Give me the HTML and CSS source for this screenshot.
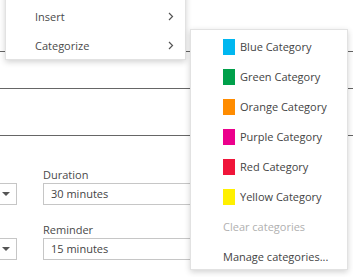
FILE: index.html
```html
<!DOCTYPE html>
<html>
    <head>
        <link rel="stylesheet" href="styles.css">
    </head>
    <body>
        <div class="page">
            <div class="rule rule1"></div>
            <div class="rule rule2"></div>
            <div class="rule rule3"></div>

            <div class="fields">
                <div class="row">
                    <div class="spacer"></div>
                    <div class="label">Duration</div>
                </div>
                <div class="row">
                    <div class="select"><span class="caret"></span></div>
                    <div class="input">30 minutes</div>
                </div>
                <div class="row label-row">
                    <div class="spacer"></div>
                    <div class="label">Reminder</div>
                </div>
                <div class="row">
                    <div class="select"><span class="caret"></span></div>
                    <div class="input">15 minutes</div>
                </div>
            </div>
        </div>

        <!-- context menu -->
        <ul class="menu mainMenu">
            <li>Insert<svg class="chev" width="6" height="9" viewBox="0 0 6 9"><path d="M1 1 L4.5 4.5 L1 8" fill="none" stroke="#555" stroke-width="1.2"/></svg></li>
            <li>Categorize<svg class="chev" width="6" height="9" viewBox="0 0 6 9"><path d="M1 1 L4.5 4.5 L1 8" fill="none" stroke="#555" stroke-width="1.2"/></svg></li>
        </ul>

        <ul class="menu subMenu">
            <li><span class="swatch blue"></span>Blue Category</li>
            <li><span class="swatch green"></span>Green Category</li>
            <li><span class="swatch orange"></span>Orange Category</li>
            <li><span class="swatch purple"></span>Purple Category</li>
            <li><span class="swatch red"></span>Red Category</li>
            <li><span class="swatch yellow"></span>Yellow Category</li>
            <li class="disabled">Clear categories</li>
            <li>Manage categories...</li>
        </ul>
    </body>
</html>
```

FILE: styles.css
```css
*{
    padding: 0;
    margin: 0;
    box-sizing: border-box;
}
body{
    width: 353px;
    height: 277px;
    overflow: hidden;
    position: relative;
    background: #fff;
    font-family: "Open Sans", "Noto Sans", sans-serif;
    font-size: 11px;
    color: #444;
}
.page{
    padding-top: 51px;
}
.rule{
    height: 1px;
    background-color: #666;
}
.rule2{
    margin-top: 36px;
}
.rule3{
    margin-top: 46px;
}
.fields{
    padding-top: 30px;
}
.row{
    display: flex;
    gap: 26px;
}
.label-row{
    margin-top: 16px;
}
.spacer{
    width: 17px;
}
.label{
    height: 17px;
    line-height: 17px;
    color: #4a4a4a;
}
.select{
    width: 27px;
    margin-left: -10px;
    height: 22px;
    border: 1px solid #c6c6c6;
    display: flex;
    align-items: center;
    justify-content: flex-end;
    padding-right: 6px;
}
.caret{
    width: 0;
    height: 0;
    border-left: 4px solid transparent;
    border-right: 4px solid transparent;
    border-top: 4px solid #555;
}
.input{
    width: 170px;
    height: 22px;
    line-height: 20px;
    border: 1px solid #c6c6c6;
    padding-left: 7px;
}
.menu{
    list-style: none;
    position: absolute;
    background: #fff;
    border: 1px solid #e2e2e2;
    box-shadow: 0 2px 6px rgba(0,0,0,0.18);
}
.menu li{
    height: 30px;
    line-height: 30px;
    display: flex;
    align-items: center;
}
.mainMenu{
    left: 5px;
    top: -15px;
    width: 181px;
    height: 75px;
    padding-top: 16px;
}
.mainMenu li{
    height: 29px;
    padding-left: 29px;
    padding-right: 11px;
    justify-content: space-between;
    color: #4a4a4a;
}
.subMenu{
    left: 190px;
    top: 29px;
    width: 158px;
    height: 241px;
    padding-top: 2px;
    padding-left: 32px;
}
.swatch{
    width: 12px;
    height: 16px;
    margin-right: 5px;
}
.blue{ background-color: #00b7f0; }
.green{ background-color: #00a04a; }
.orange{ background-color: #ff8c00; }
.purple{ background-color: #ec008c; }
.red{ background-color: #f0153a; }
.yellow{ background-color: #fff000; }
.subMenu .disabled{
    color: #b0b0b0;
}
```
